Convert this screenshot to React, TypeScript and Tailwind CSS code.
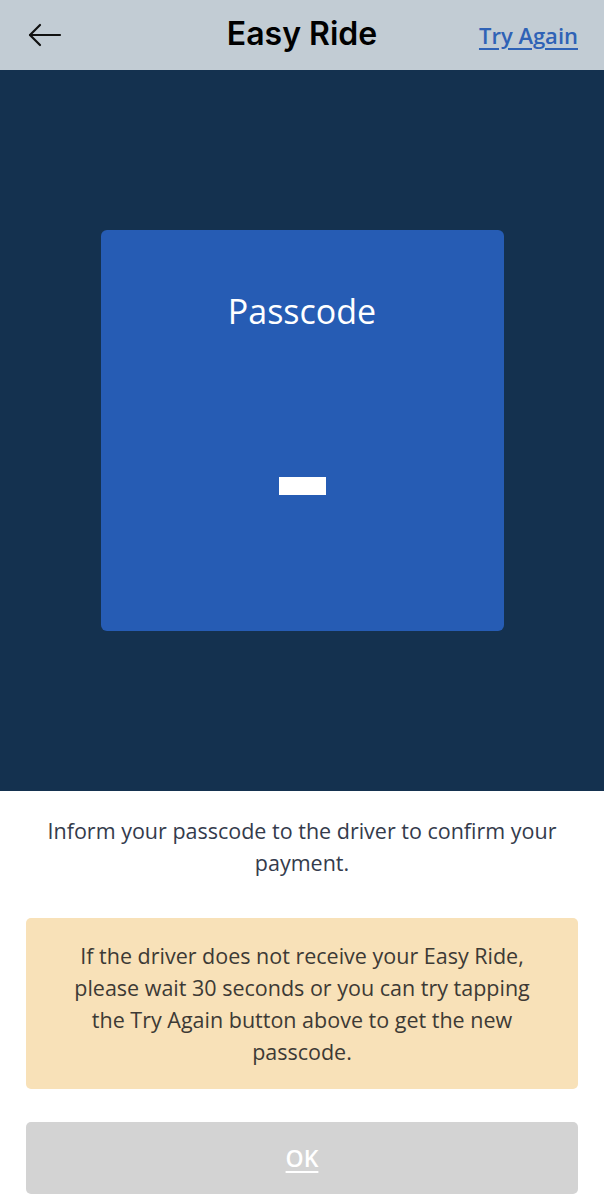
import React from 'react';

export default function App() {
  return (
    <div className="w-[604px] h-[1200px] flex flex-col bg-white overflow-hidden" style={{ fontFamily: '"Open Sans", "Noto Sans", sans-serif' }}>
      {/* Header */}
      <div className="h-[70px] shrink-0 bg-[#c2ccd4] flex items-center pl-[28px] pr-[26px] relative">
        <svg width="34" height="24" viewBox="0 0 34 24" fill="none" stroke="#111" strokeWidth="2.2" strokeLinecap="round" strokeLinejoin="round">
          <path d="M32 12H2" />
          <path d="M12 2L2 12l10 10" />
        </svg>
        <h1 className="absolute left-0 right-0 top-[14px] text-center text-[32px] leading-[40px] font-semibold text-black pointer-events-none" style={{ fontFamily: 'Inter, "Liberation Sans", sans-serif' }}>
          Easy Ride
        </h1>
        <a className="ml-auto text-[22px] font-semibold text-[#2f62b6] underline underline-offset-4 decoration-[1.5px]">Try Again</a>
      </div>

      {/* Passcode area */}
      <div className="h-[721px] shrink-0 bg-[#14314f] flex items-center justify-center">
        <div className="w-[403px] h-[401px] bg-[#265cb4] rounded-[6px] flex flex-col items-center pt-[61px]">
          <p className="text-[34px] text-white leading-[40px]">Passcode</p>
          <div className="mt-[146px] w-[47px] h-[18px] bg-white" />
        </div>
      </div>

      {/* Instructions */}
      <div className="flex flex-col px-[26px]">
        <p className="mt-[24px] text-center text-[21.5px] leading-[32px] text-[#343b4c]">
          Inform your passcode to the driver to confirm your payment.
        </p>
        <div className="mt-[39px] h-[171px] bg-[#f8e1b8] rounded-[5px] flex items-center justify-center px-[40px]">
          <p className="text-center text-[21.5px] leading-[32px] text-[#3d3a35]">
            If the driver does not receive your Easy Ride, please wait 30 seconds or you can try tapping the Try Again button above to get the new passcode.
          </p>
        </div>
        <button className="mt-[33px] h-[72px] bg-[#d3d3d3] rounded-[5px] text-white text-[23px] font-semibold underline underline-offset-4">
          OK
        </button>
      </div>
    </div>
  );
}
